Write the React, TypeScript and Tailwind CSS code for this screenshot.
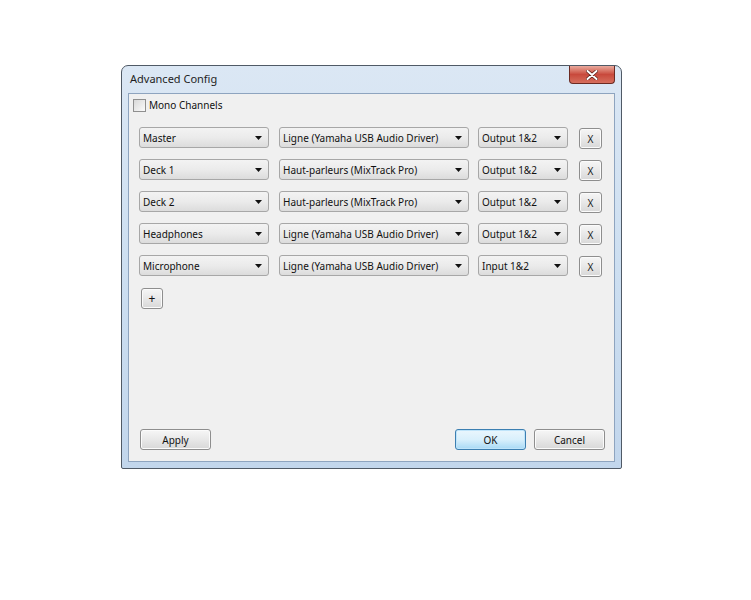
import React from 'react';

const rows = [
  { channel: 'Master', device: 'Ligne (Yamaha USB Audio Driver)', port: 'Output 1&2' },
  { channel: 'Deck 1', device: 'Haut-parleurs (MixTrack Pro)', port: 'Output 1&2' },
  { channel: 'Deck 2', device: 'Haut-parleurs (MixTrack Pro)', port: 'Output 1&2' },
  { channel: 'Headphones', device: 'Ligne (Yamaha USB Audio Driver)', port: 'Output 1&2' },
  { channel: 'Microphone', device: 'Ligne (Yamaha USB Audio Driver)', port: 'Input 1&2' },
];

const Combo: React.FC<{ value: string; className: string }> = ({ value, className }) => (
  <div
    className={
      'h-[21px] flex items-center justify-between pl-[3px] pr-[6px] border border-[#a7a7a7] rounded-[3px] bg-gradient-to-b from-[#f3f3f3] via-[#ebebeb] to-[#dcdcdc] ' +
      className
    }
  >
    <span className="whitespace-nowrap leading-[14px]">{value}</span>
    <svg width="7" height="4" viewBox="0 0 7 4" className="shrink-0">
      <path d="M0 0h7L3.5 4z" fill="#111" />
    </svg>
  </div>
);

const Button: React.FC<{ children: React.ReactNode; className?: string; focused?: boolean }> = ({
  children,
  className = '',
  focused,
}) => (
  <div
    className={
      'flex items-center justify-center border rounded-[3px] leading-[14px] ' +
      (focused
        ? 'border-[#3c7fb1] bg-gradient-to-b from-[#eaf6fd] via-[#d9f0fc] to-[#a7d9f5] shadow-[inset_0_0_0_1px_#bfe4fa] '
        : 'border-[#8e8e8e] bg-gradient-to-b from-[#f6f6f6] via-[#e8e8e8] to-[#d8d8d8] shadow-[inset_0_0_0_1px_#fbfbfb] ') +
      className
    }
  >
    {children}
  </div>
);

export default function App() {
  return (
    <div
      className="min-h-[600px] w-[751px] bg-white pt-[65px] pl-[121px] text-[10px] text-[#111]"
      style={{ fontFamily: '"Noto Sans", "Open Sans", sans-serif' }}
    >
      {/* Window */}
      <div className="w-[501px] h-[404px] flex flex-col border border-[#505a66] rounded-t-[7px] rounded-b-[2px] bg-gradient-to-b from-[#dbe7f4] via-[#cddff1] to-[#c2d6ec]">
        {/* Title bar */}
        <div className="h-[27px] flex items-start justify-between pl-[8px] pr-[6px]">
          <span className="mt-[6px] text-[11px] leading-[14px] text-[#1e1e1e]">Advanced Config</span>
          <div className="w-[46px] h-[18px] flex items-center justify-center rounded-b-[4px] border border-t-0 border-[#6b2a22] bg-gradient-to-b from-[#e9a99d] via-[#c8493c] to-[#d66e5d]">
            <svg width="12" height="10" viewBox="0 0 12 10">
              <path d="M1.5 1l9 8M10.5 1l-9 8" stroke="#5a1d15" strokeWidth="3.4" strokeLinecap="round" />
              <path d="M1.5 1l9 8M10.5 1l-9 8" stroke="#fff" strokeWidth="2" strokeLinecap="round" />
            </svg>
          </div>
        </div>

        {/* Client area */}
        <div className="flex-1 mx-[6px] mb-[6px] border border-[#8ea4bf] bg-[#f0f0f0] flex flex-col">
          <label className="flex items-center gap-[3px] mt-[4px] ml-[4px] h-[14px]">
            <span className="w-[13px] h-[13px] border border-[#8f8f8f] bg-gradient-to-br from-[#d8d8d8] to-[#fbfbfb]" />
            <span className="leading-[14px]">Mono Channels</span>
          </label>

          <div className="mt-[15px] ml-[10px] flex flex-col gap-[11px]">
            {rows.map((r, i) => (
              <div key={i} className="flex items-start h-[21px]">
                <Combo value={r.channel} className="w-[130px]" />
                <Combo value={r.device} className="w-[190px] ml-[10px]" />
                <Combo value={r.port} className="w-[90px] ml-[9px]" />
                <Button className="w-[23px] h-[21px] ml-[11px] mt-[1px] text-[#222]">X</Button>
              </div>
            ))}
          </div>

          <Button className="w-[22px] h-[21px] ml-[12px] mt-[12px] text-[12px]">+</Button>

          <div className="flex-1" />

          <div className="flex items-center mb-[11px] ml-[11px] mr-[9px]">
            <Button className="w-[71px] h-[21px]">Apply</Button>
            <div className="flex-1" />
            <Button focused className="w-[71px] h-[21px]">OK</Button>
            <Button className="w-[71px] h-[21px] ml-[8px]">Cancel</Button>
          </div>
        </div>
      </div>
    </div>
  );
}
